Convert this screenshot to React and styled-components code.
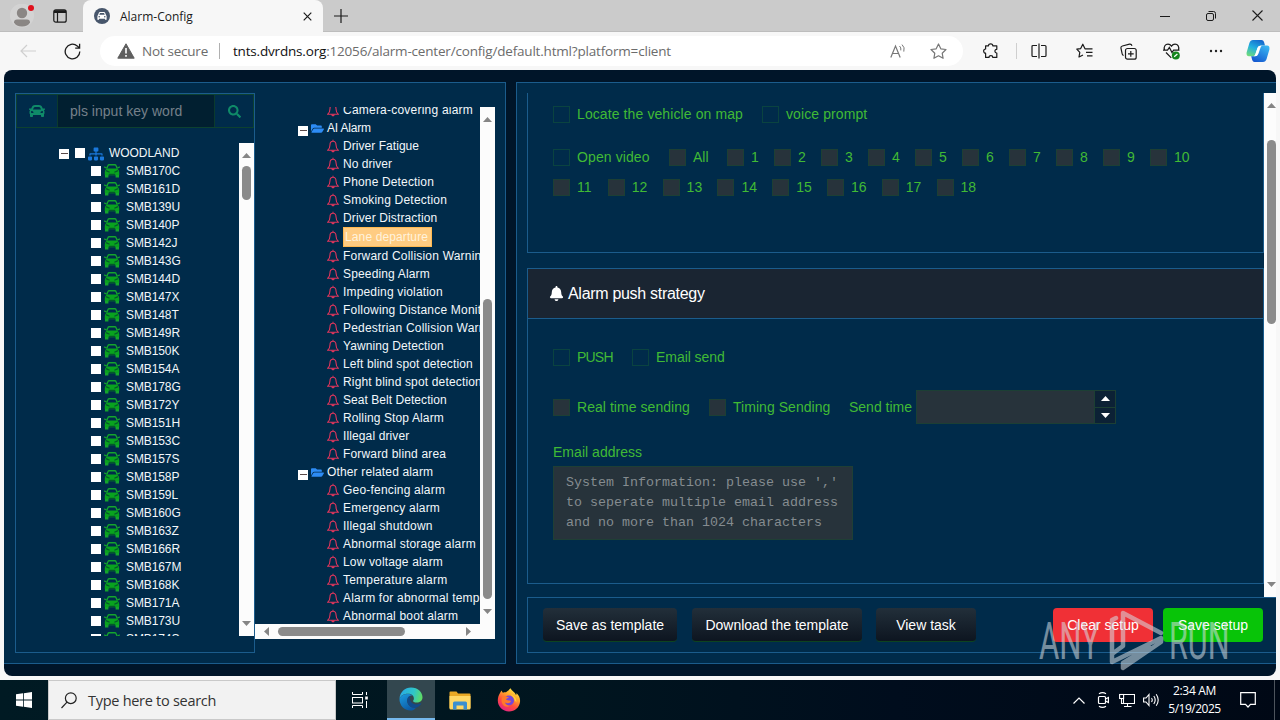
/***************************\
*                           *
*  Alarm-Config page        *
*                           *
\***************************/

import React from 'react';
import styled, { createGlobalStyle, css } from 'styled-components';
import { FaCar, FaSearch, FaSitemap, FaFolderOpen, FaBell } from 'react-icons/fa';

const GlobalStyle = createGlobalStyle`
  * { box-sizing: border-box; }
  body {
    margin: 0;
    overflow: hidden;
    font-family: 'Liberation Sans', Arial, sans-serif;
  }
  svg { display: block; flex: none; }
`;

const line = '#1b5c8c';
const green = '#40ba35';

const Desktop = styled.div`
  position: relative;
  width: 1280px;
  height: 720px;
  overflow: hidden;
  display: flex;
  flex-direction: column;
  background: #f7f7f7;
`;

//Text with adjustable spacing
const Txt = styled.span`
  white-space: pre;
  letter-spacing: ${(p) => p.$ls || 0}px;
  margin-left: ${(p) => p.$ml || 0}px;
`;

//Centred place for one icon
const Slot = styled.div`
  width: ${(p) => p.$w}px;
  height: 100%;
  flex: none;
  display: flex;
  align-items: center;
  justify-content: center;
  margin-left: ${(p) => p.$ml || 0}px;
`;

//Browser styling
const TabStrip = styled.div`
  height: 32px;
  flex: none;
  display: flex;
  background: #cbcbcb;
  border-bottom: 1px solid #bdbdbd;
  font-family: 'Open Sans', 'Noto Sans', sans-serif;
`;

const Tab = styled.div`
  width: 240px;
  height: 32px;
  margin-left: 7px;
  padding: 0 11px 0 11px;
  display: flex;
  align-items: center;
  background: #f7f7f7;
  border-radius: 8px 8px 0 0;
  font-size: 12px;
  color: #1a1a1a;
`;

const TabTitle = styled(Txt)`
  flex: 1;
`;

const Spacer = styled.div`
  flex: 1;
`;

const AddressRow = styled.div`
  height: 38px;
  flex: none;
  display: flex;
  align-items: center;
  background: #f7f7f7;
  font-family: 'Open Sans', 'Noto Sans', sans-serif;
`;

const AddressBar = styled.div`
  width: 863px;
  height: 30px;
  margin-left: 12px;
  padding-left: 17px;
  display: flex;
  align-items: center;
  background: #fff;
  border-radius: 15px;
  font-size: 13.5px;
  color: #6c6c6c;
`;

const UrlHost = styled(Txt)`
  color: #111;
`;

const Divider = styled.div`
  width: 1px;
  height: ${(p) => p.$h}px;
  margin: ${(p) => p.$m || '0'};
  background: ${(p) => p.$c || '#b0b0b0'};
`;

//The page itself
const Page = styled.div`
  width: 1272px;
  height: 606px;
  margin-left: 4px;
  flex: none;
  padding-top: 12px;
  display: flex;
  align-items: flex-start;
  gap: 10px;
  overflow: hidden;
  background: #001529;
  border-radius: 8px;
`;

const LeftPanel = styled.div`
  width: 502px;
  height: 582px;
  flex: none;
  padding: 10px 0 0 11px;
  display: flex;
  background: #002b4a;
  border: 1px solid ${line};
  border-left: none;
`;

const VehicleBox = styled.div`
  width: 240px;
  height: 560px;
  border: 1px solid ${line};
`;

const SearchBar = styled.div`
  width: 238px;
  height: 34px;
  display: flex;
  border: 1px solid #0d4130;
`;

const SearchCell = styled.div`
  width: ${(p) => p.$w}px;
  display: flex;
  align-items: center;
  justify-content: center;
  color: #0f8a68;
`;

const SearchInput = styled.div`
  flex: 1;
  padding-left: 12px;
  display: flex;
  align-items: center;
  background: #011f30;
  border: solid #0b3a2d;
  border-width: 0 1px;
  font-size: 14px;
  color: #75808a;
`;

const TreeArea = styled.div`
  width: 238px;
  height: 493px;
  margin-top: 15px;
  display: flex;
`;

const Tree = styled.div`
  flex: 1;
  height: 100%;
  padding-top: 1px;
  overflow: hidden;
`;

const VehicleRow = styled.div`
  height: 18px;
  padding-left: ${(p) => p.$pad}px;
  display: flex;
  align-items: center;
  font-size: 12px;
  color: #f2f7fa;
`;

const WhiteCheck = styled.div`
  width: 10px;
  height: 10px;
  flex: none;
  margin-left: ${(p) => p.$ml || 0}px;
  background: #fff;
`;

const MinusBox = styled.div`
  width: 10px;
  height: 10px;
  flex: none;
  display: flex;
  align-items: center;
  justify-content: center;
  margin-top: ${(p) => p.$mt}px;
  background: #fff;
  &::after {
    content: '';
    width: 7px;
    height: 1px;
    background: #5a4a4a;
  }
`;

const SiteIcon = styled(FaSitemap)`
  margin: 1px 0 0 3px;
  color: #1a78dc;
`;

const FolderIcon = styled(FaFolderOpen)`
  margin-left: 3px;
  color: #2d8cf5;
`;

//Scrollbar styling
const VBar = styled.div`
  width: ${(p) => p.$w}px;
  height: ${(p) => p.$h}px;
  flex: none;
  padding: 10px 0;
  display: flex;
  flex-direction: column;
  align-items: center;
  background: #fcfcfc;
`;

const VThumb = styled.div`
  width: 9px;
  height: ${(p) => p.$h}px;
  flex: none;
  margin-top: ${(p) => p.$mt}px;
  border-radius: 5px;
  background: #8b8b8b;
`;

const HBar = styled.div`
  width: 240px;
  height: 15px;
  padding: 0 24px 0 9px;
  display: flex;
  align-items: center;
  background: #fcfcfc;
`;

const HThumb = styled.div`
  width: 127px;
  height: 9px;
  margin-left: 9px;
  border-radius: 5px;
  background: #8b8b8b;
`;

//Alarm list styling
const AlarmColumn = styled.div`
  width: 240px;
  height: 532px;
  margin-top: 14px;
`;

const AlarmArea = styled.div`
  height: 517px;
  display: flex;
`;

const AlarmTree = styled.div`
  width: 225px;
  height: 517px;
  overflow: hidden;
`;

const AlarmRow = styled.div`
  width: 400px;
  height: ${(p) => (p.$sel ? 20 : 18)}px;
  margin-top: ${(p) => p.$mt || 0}px;
  padding-left: ${(p) => (p.$group ? 43 : 72)}px;
  display: flex;
  align-items: center;
  font-size: 12px;
  color: #f2f7fa;
`;

const AlarmLabel = styled(Txt)`
  ${(p) =>
    p.$sel &&
    css`
      width: 89px;
      height: 20px;
      padding-left: 1px;
      line-height: 18px;
      background: #ffcc82;
      border: 1px solid #ffb951;
      color: #fff3dd;
    `}
`;

//Right side styling
const RightPanel = styled.div`
  width: 790px;
  height: 582px;
  flex: none;
  padding: 10px 0 0 10px;
  background: #002b4a;
  border: 1px solid ${line};
`;

const ScrollRow = styled.div`
  height: 504px;
  display: flex;
`;

const Scrolled = styled.div`
  width: 737px;
  height: 504px;
  overflow: hidden;
`;

const ActionBox = styled.div`
  height: 160px;
  padding: 11px 0 0 25px;
  border: 1px solid ${line};
  border-top: none;
  color: ${green};
`;

const PushBox = styled.div`
  height: 316px;
  margin-top: 15px;
  border: 1px solid ${line};
  color: ${green};
`;

const PushHead = styled.div`
  height: 50px;
  padding-left: 21px;
  display: flex;
  align-items: center;
  gap: 4px;
  background: #1a2532;
  border-bottom: 1px solid ${line};
  font-size: 16px;
  color: #fff;
`;

const PushBody = styled.div`
  padding: 28px 0 0 25px;
`;

const CheckRow = styled.div`
  height: ${(p) => p.$h || 20}px;
  margin-top: ${(p) => p.$mt || 0}px;
  display: flex;
  align-items: center;
  font-size: 14px;
`;

const CheckItem = styled.div`
  width: ${(p) => p.$w}px;
  flex: none;
  display: flex;
  align-items: center;
  gap: 7px;
`;

const CheckBox = styled.div`
  width: 17px;
  height: 17px;
  flex: none;
  border: 1px solid ${(p) => (p.$off ? '#1c3f34' : '#0a4340')};
  background: ${(p) => (p.$off ? '#27333b' : 'transparent')};
`;

const TimeInput = styled.div`
  width: 200px;
  height: 34px;
  display: flex;
  background: #27333b;
  border: 1px solid #1c3f34;
`;

const Spinner = styled.div`
  width: 21px;
  margin-left: auto;
  display: flex;
  flex-direction: column;
  background: #0c2135;
  border-left: 1px solid #1c3f33;
`;

const SpinHalf = styled.div`
  flex: 1;
  display: flex;
  align-items: center;
  justify-content: center;
  & + & {
    border-top: 1px solid #1c3f33;
  }
`;

const FieldName = styled.div`
  height: 20px;
  margin-top: 18px;
  line-height: 20px;
  font-size: 14px;
`;

const EmailArea = styled.div`
  width: 300px;
  height: 74px;
  margin-top: 4px;
  padding: 6px 12px;
  background: #27333b;
  border: 1px solid #1f3f35;
  font-family: 'Liberation Mono', 'Courier New', monospace;
  font-size: 13.33px;
  line-height: 20px;
  color: #858c90;
`;

const Footer = styled.div`
  height: 56px;
  padding: 10px 0 0 15px;
  display: flex;
  border: 1px solid ${line};
`;

const Button = styled.div`
  width: ${(p) => p.$w}px;
  height: 34px;
  margin-left: ${(p) => p.$ml || 0}px;
  display: flex;
  align-items: center;
  justify-content: center;
  border-radius: 4px;
  font-size: 14px;
  color: #fff;
  background: ${(p) => p.$bg || 'linear-gradient(#222f3a, #0d1520)'};
  border-bottom: 1px solid ${(p) => p.$bg || '#0d4420'};
`;

//Taskbar styling
const Taskbar = styled.div`
  height: 40px;
  margin-top: 4px;
  flex: none;
  display: flex;
  background: linear-gradient(90deg, #001a23 0%, #00151f 45%, #000d1d 70%, #000815 100%);
  font-family: 'Open Sans', 'Noto Sans', sans-serif;
`;

const TaskSearch = styled.div`
  width: 288px;
  height: 40px;
  padding-left: 12px;
  display: flex;
  align-items: center;
  gap: 11px;
  background: #f2f2f2;
  border: 1px solid #c9c9c9;
  font-size: 14.5px;
  color: #333;
`;

const ActiveApp = styled(Slot)`
  background: #33474f;
  border-bottom: 2px solid #76b9ed;
`;

const Clock = styled.div`
  width: 63px;
  padding-top: 2px;
  font-size: 12px;
  line-height: 18px;
  text-align: center;
  color: #fff;
`;

const ShowDesktop = styled.div`
  width: 6px;
  margin-left: 5px;
  border-left: 1px solid #4d545c;
`;

//Sits over the page
const Watermark = styled.svg`
  position: absolute;
  left: 1030px;
  top: 600px;
`;

const vehicles = [
  'SMB170C', 'SMB161D', 'SMB139U', 'SMB140P', 'SMB142J', 'SMB143G', 'SMB144D',
  'SMB147X', 'SMB148T', 'SMB149R', 'SMB150K', 'SMB154A', 'SMB178G', 'SMB172Y',
  'SMB151H', 'SMB153C', 'SMB157S', 'SMB158P', 'SMB159L', 'SMB160G', 'SMB163Z',
  'SMB166R', 'SMB167M', 'SMB168K', 'SMB171A', 'SMB173U', 'SMB174S',
];

const alarms = [
  { t: 'Camera-covering alarm', ls: 0.22 },
  { t: 'AI Alarm', group: true, ls: -0.2 },
  { t: 'Driver Fatigue', ls: 0.05 },
  { t: 'No driver', ls: 0.05 },
  { t: 'Phone Detection', ls: 0.15 },
  { t: 'Smoking Detection', ls: 0.2 },
  { t: 'Driver Distraction', ls: 0.13 },
  { t: 'Lane departure', sel: true, ls: 0.12 },
  { t: 'Forward Collision Warning', ls: 0.2 },
  { t: 'Speeding Alarm', ls: 0.15 },
  { t: 'Impeding violation', ls: 0.17 },
  { t: 'Following Distance Monitoring', ls: 0.2 },
  { t: 'Pedestrian Collision Warning', ls: 0.2 },
  { t: 'Yawning Detection', ls: 0.1 },
  { t: 'Left blind spot detection', ls: 0.12 },
  { t: 'Right blind spot detection', ls: 0.16 },
  { t: 'Seat Belt Detection', ls: 0.05 },
  { t: 'Rolling Stop Alarm', ls: 0.12 },
  { t: 'Illegal driver', ls: 0.12 },
  { t: 'Forward blind area', ls: 0.17 },
  { t: 'Other related alarm', group: true, ls: 0.15 },
  { t: 'Geo-fencing alarm', ls: 0.2 },
  { t: 'Emergency alarm', ls: 0.2 },
  { t: 'Illegal shutdown', ls: 0.23 },
  { t: 'Abnormal storage alarm', ls: 0.22 },
  { t: 'Low voltage alarm', ls: 0.15 },
  { t: 'Temperature alarm', ls: 0.22 },
  { t: 'Alarm for abnormal temperature', ls: 0.2 },
  { t: 'Abnormal boot alarm', ls: 0.2 },
];

const Icon = ({ w = 18, h = w, vb, children, ...rest }) => (
  <svg width={w} height={h} viewBox={vb || `0 0 ${w} ${h}`} fill="none" stroke="#1b1b1b" strokeWidth="1.2" {...rest}>
    {children}
  </svg>
);

const Arrow = ({ dir, c = '#858585' }) => {
  const d = {
    up: 'M0 5L4.5 0L9 5Z',
    down: 'M0 0L4.5 5L9 0Z',
    left: 'M5 0L0 4.5L5 9Z',
    right: 'M0 0L5 4.5L0 9Z',
  }[dir];
  const flat = dir === 'up' || dir === 'down';
  return (
    <svg width={flat ? 9 : 5} height={flat ? 5 : 9}>
      <path d={d} fill={c} />
    </svg>
  );
};

const CarIcon = styled(Icon)`
  margin-left: 3px;
`;

const TreeCar = () => (
  <CarIcon w={16} h={14} stroke="#14a52d">
    <path d="M2.6 4.6L4 1.6Q4.3 0.8 5.2 0.8H10.8Q11.7 0.8 12 1.6L13.4 4.6" strokeWidth="1.4" />
    <path d="M0.2 2.8L2.4 4M15.8 2.8L13.6 4" strokeWidth="1.3" />
    <path d="M3 4.4H13Q15.2 5.4 15.2 8V11.2H0.8V8Q0.8 5.4 3 4.4Z" fill="#09a31f" stroke="none" />
    <path d="M1 11H4.4V13.6H1ZM11.6 11H15V13.6H11.6Z" fill="#14a52d" stroke="none" />
    <path d="M2 6.6L5.6 8.2M14 6.6L10.4 8.2M4.8 10.4H11.2" stroke="#04572b" strokeWidth="1.2" />
  </CarIcon>
);

const Bell = () => (
  <Icon w={12} h={14} stroke="#e0365c" strokeWidth="1.1">
    <path d="M6 0.8V2.2M6 2.2C3.9 2.2 3 3.8 3 5.8C3 8.6 2.4 9.8 0.8 11.2H11.2C9.6 9.8 9 8.6 9 5.8C9 3.8 8.1 2.2 6 2.2Z" />
    <path d="M4.8 12Q6 13.8 7.2 12Z" fill="#e0365c" />
  </Icon>
);

const Check = ({ w, off, ls, children }) => (
  <CheckItem $w={w}>
    <CheckBox $off={off} />
    <Txt $ls={ls}>{children}</Txt>
  </CheckItem>
);

const EdgeLogo = () => (
  <svg width="24" height="24" viewBox="0 0 24 24">
    <defs>
      <linearGradient id="edgeTop" x1="0" y1="0.3" x2="1" y2="0.5">
        <stop offset="0" stopColor="#28a9e8" />
        <stop offset="0.6" stopColor="#2fc6c8" />
        <stop offset="1" stopColor="#5fdc64" />
      </linearGradient>
      <linearGradient id="edgeLow" x1="0" y1="0" x2="0.6" y2="1">
        <stop offset="0" stopColor="#1b9de2" />
        <stop offset="1" stopColor="#0c59a4" />
      </linearGradient>
    </defs>
    <path d="M0.5 11.5C1 5 6 0.5 12 0.5C19 0.5 23.5 5.5 23.5 10.2C23.5 13.7 20.8 15.6 17.8 15.6C15.4 15.6 14 14.8 14 14C14 13.4 14.9 13 14.9 11.4C14.9 8.7 12.5 6.8 9 6.8C4.6 6.8 1.7 9 0.5 11.5Z" fill="url(#edgeTop)" />
    <path d="M0.5 11.5C1.7 8.6 4.9 6.9 8.6 6.9C11 6.9 12.6 7.6 13.6 8.5C10.6 8 8.2 10.6 8.2 13.6C8.2 18 12 21.6 17 20.7C15.5 22.8 13.4 23.5 11.6 23.5C5 23.5 0.2 18 0.5 11.5Z" fill="url(#edgeLow)" />
    <path d="M8.2 13.6C8.2 11.4 9.5 9.5 11 9.1C10 14 13 17.4 17.4 17.4C19.4 17.4 20.9 16.7 21.8 16.2C22.3 16 22.5 16.3 22.2 16.8C21 19 18.6 20.8 16 20.9C12 21.2 8.2 18 8.2 13.6Z" fill="#114a8b" />
  </svg>
);

const FirefoxLogo = () => (
  <svg width="24" height="24" viewBox="0 0 24 24">
    <defs>
      <linearGradient id="fox" x1="0.8" y1="0" x2="0.25" y2="1">
        <stop offset="0" stopColor="#fff14a" />
        <stop offset="0.35" stopColor="#ffa32a" />
        <stop offset="0.65" stopColor="#ff4b3e" />
        <stop offset="1" stopColor="#e3208a" />
      </linearGradient>
    </defs>
    <path d="M3 5C3.3 4 4 3 4.8 2.4C5 3.5 5.4 4.2 6 4.8C7.5 4 8.6 4.2 9 4.3C10.5 2.8 12 2.2 13.5 0.3C14.5 2.8 18 4.2 19 7C19.6 6.6 19.6 5.6 19.4 5C22.2 7.6 23.4 10.5 23 14C22.3 19.6 17.8 23.5 12 23.5C5.6 23.5 0.8 18.6 0.8 12.6C0.8 9.8 1.6 7.2 3 5Z" fill="url(#fox)" />
    <circle cx="12" cy="12.5" r="5" fill="#7546d9" />
    <path d="M5 9.5C7 8 10.5 8.2 12 10C10.4 10 9.3 10.6 9.1 11.4C10.1 12.6 13.3 12 14 13.2C13 15.4 10.3 15.8 8 14.6C8.6 17 11 18 13.5 17.6C11 19.5 7.5 19 5.8 16.5C4.4 14.4 4.2 11.6 5 9.5Z" fill="#ff7a2a" />
    <path d="M13 6.5C17 7 19.8 10.4 19.4 14.4C18.8 13.4 18.4 13 17.8 12.6C17.4 9.8 15.6 7.8 13 6.5Z" fill="#ffd23a" />
  </svg>
);

const BrowserTop = () => (
  <>
    <TabStrip>
      <Slot $w={44}>
        <svg width="24" height="24" viewBox="0 0 24 24">
          <circle cx="12" cy="11.5" r="12" fill="#d3d3d3" />
          <circle cx="12" cy="9" r="5.2" fill="#8a8684" />
          <path d="M4 18.5Q4 15.5 7 15.5H17Q20 15.5 20 18.5Q18 22.5 12 22.5Q6 22.5 4 18.5Z" fill="#8a8684" />
          <circle cx="21" cy="4" r="3" fill="#e0101c" />
        </svg>
      </Slot>
      <Slot $w={32}>
        <Icon w={14}>
          <rect x="0.8" y="0.8" width="12.4" height="12.4" rx="2" />
          <path d="M1 2.6H13" strokeWidth="2.8" />
          <path d="M4.5 3V13" />
        </Icon>
      </Slot>
      <Tab>
        <svg width="16" height="16" viewBox="0 0 16 16">
          <circle cx="8" cy="8" r="8" fill="#47566b" />
          <path d="M4 7L5 4.6Q5.2 4 6 4H10Q10.8 4 11 4.6L12 7L12.6 8V11.8H11V10.8H5V11.8H3.4V8Z" fill="#fff" />
          <path d="M5.2 6.8L6 5H10L10.8 6.8Z" fill="#47566b" />
          <circle cx="5.2" cy="8.8" r="0.8" fill="#47566b" />
          <circle cx="10.8" cy="8.8" r="0.8" fill="#47566b" />
        </svg>
        <TabTitle $ls={0} $ml={10}>Alarm-Config</TabTitle>
        <Icon w={9}>
          <path d="M0.7 0.7L8.3 8.3M8.3 0.7L0.7 8.3" />
        </Icon>
      </Tab>
      <Slot $w={35}>
        <Icon w={14}>
          <path d="M7 0V14M0 7H14" />
        </Icon>
      </Slot>
      <Spacer />
      <Slot $w={46}>
        <Icon w={10}>
          <path d="M0 5.5H10" strokeWidth="1" />
        </Icon>
      </Slot>
      <Slot $w={46}>
        <Icon w={10} strokeWidth="1">
          <rect x="0.5" y="2.5" width="7" height="7" rx="1.5" />
          <path d="M2.5 0.5H7.5Q9.5 0.5 9.5 2.5V7.5" />
        </Icon>
      </Slot>
      <Slot $w={46}>
        <Icon w={11}>
          <path d="M0.5 0.5L10.5 10.5M10.5 0.5L0.5 10.5" strokeWidth="1.1" />
        </Icon>
      </Slot>
    </TabStrip>
    <AddressRow>
      <Slot $w={56}>
        <Icon w={16} h={14} stroke="#cfcfcf">
          <path d="M16 7H1M7 1L1 7L7 13" />
        </Icon>
      </Slot>
      <Slot $w={32}>
        <Icon w={17} strokeWidth="1.3">
          <path d="M15.8 8.5A7.3 7.3 0 1 1 13.2 2.9L15.4 5M15.6 0.8V5.2H11.2" />
        </Icon>
      </Slot>
      <AddressBar>
        <svg width="18" height="16" viewBox="0 0 18 16">
          <path d="M9 0.8L17.2 15.2H0.8Z" fill="#5f5f5f" stroke="#5f5f5f" strokeLinejoin="round" />
          <path d="M9 5V10.5M9 12V13.8" stroke="#fff" strokeWidth="1.6" />
        </svg>
        <Txt $ls={-0.25} $ml={7}>Not secure</Txt>
        <Divider $h={16} $m="0 13px 0 11px" />
        <UrlHost $ls={-0.18}>tnts.dvrdns.org</UrlHost>
        <Txt $ls={-0.19}>:12056/alarm-center/config/default.html?platform=client</Txt>
        <Spacer />
        <Slot $w={40}>
          <Icon w={16} h={14} stroke="#777">
            <path d="M0.8 13.5L5.5 2L10.2 13.5M2.5 9.5H8.5" />
            <path d="M9.5 2Q11.4 3.6 10.8 6.4M12 0.6Q15.2 3.4 13.8 7.6" strokeWidth="1" />
          </Icon>
        </Slot>
        <Slot $w={40}>
          <Icon w={17} h={16} stroke="#777" strokeLinejoin="round">
            <path d="M8.5 1L10.8 5.8L16 6.5L12.2 10.2L13.1 15.3L8.5 12.8L3.9 15.3L4.8 10.2L1 6.5L6.2 5.8Z" />
          </Icon>
        </Slot>
        <Slot $w={5} />
      </AddressBar>
      <Slot $w={50} $ml={3}>
        <Icon w={16} strokeWidth="1.2" strokeLinejoin="round">
          <path d="M5.5 2.8C5.5 0.2 9.8 0.2 9.8 2.8H13.8V6.3C11.3 6 11.3 10.2 13.8 10V14.4H9.8C9.8 12 6 12 6 14.4H2.6V10.2C0 10.2 0 6 2.6 6V2.8Z" />
        </Icon>
      </Slot>
      <Divider $h={16} $c="#cfcfcf" />
      <Slot $w={44}>
        <Icon w={16}>
          <path d="M6 2.5H2Q1 2.5 1 3.5V12.5Q1 13.5 2 13.5H6M10 2.5H14Q15 2.5 15 3.5V12.5Q15 13.5 14 13.5H10M8 0.5V15.5" />
        </Icon>
      </Slot>
      <Slot $w={46}>
        <Icon w={17} h={16} strokeLinejoin="round">
          <path d="M10 5.8H9L6.8 1.2L4.7 5.6L0.8 6.2L3.8 9.4L3 14L7 12M10 5.8H16.5M10 9.3H16.5M11 12.8H16.5" />
        </Icon>
      </Slot>
      <Slot $w={42}>
        <Icon w={17}>
          <rect x="5.5" y="5.5" width="10.7" height="10.7" rx="2" />
          <path d="M10.8 8V13.8M8 10.9H13.7M3.6 12.5Q2.4 12 2.2 11L0.9 5Q0.7 3.4 2.4 3L9.5 1.2Q11.4 0.9 12 2.8" />
        </Icon>
      </Slot>
      <Slot $w={46}>
        <Icon w={18} h={17}>
          <path d="M1.5 7C0.4 3.5 2.4 1.2 5 1.2Q7.2 1.2 8.5 3.2Q9.8 1.2 12 1.2C14.8 1.2 16.6 3.6 15.4 7M0 7.2H4.5L6.4 4.5L9 9.5L10.6 7.2H16.5M3 9.5L8.3 14.8" />
          <circle cx="12.8" cy="12.4" r="4" fill="#14851c" stroke="none" />
          <path d="M11.2 13.8L14.4 11" stroke="#fff" />
        </Icon>
      </Slot>
      <Slot $w={42}>
        <Icon w={14} h={4} stroke="none">
          <circle cx="2" cy="2" r="1.2" fill="#222" />
          <circle cx="7" cy="2" r="1.2" fill="#222" />
          <circle cx="12" cy="2" r="1.2" fill="#222" />
        </Icon>
      </Slot>
      <Slot $w={42}>
        <svg width="24" height="24" viewBox="0 0 24 24">
          <defs>
            <linearGradient id="copA" x1="0.7" y1="0" x2="0.2" y2="1">
              <stop offset="0" stopColor="#1568cd" />
              <stop offset="0.5" stopColor="#22aee0" />
              <stop offset="1" stopColor="#6edb7c" />
            </linearGradient>
            <linearGradient id="copB" x1="0.8" y1="0" x2="0.2" y2="1">
              <stop offset="0" stopColor="#39b6f2" />
              <stop offset="1" stopColor="#1456cf" />
            </linearGradient>
          </defs>
          <path d="M7 1H15.5Q17.5 1 18 3L19 6.5H15Q12.5 6.5 11.6 9L9.4 15.5Q8.8 17.2 7 17.2H3Q0 17.2 0.6 13.5L3.4 4Q4.4 1 7 1Z" fill="url(#copA)" />
          <path d="M17 23H8.5Q6.8 23 6.2 21L5.2 17.3H9Q11.5 17.3 12.4 14.8L14.6 8.4Q15.2 6.6 17 6.6H21Q24 6.6 23.4 10.4L20.6 20Q19.6 23 17 23Z" fill="url(#copB)" />
          <path d="M10.2 17Q11 16.6 11.5 15.5L13.8 8.5Q14.2 7.2 15 6.7L13 7Q12 7.5 11.4 9L9.2 15.6Q9 16.5 8.2 17.2Z" fill="#fff" />
        </svg>
      </Slot>
    </AddressRow>
  </>
);

const VehicleList = () => (
  <VehicleBox>
    <SearchBar>
      <SearchCell $w={40}>
        <FaCar size={16} />
      </SearchCell>
      <SearchInput>
        <Txt $ls={0.02}>pls input key word</Txt>
      </SearchInput>
      <SearchCell $w={38}>
        <FaSearch size={13} />
      </SearchCell>
    </SearchBar>
    <TreeArea>
      <Tree>
        <VehicleRow $pad={43}>
          <MinusBox $mt={1} />
          <WhiteCheck $ml={6} />
          <SiteIcon size={16} />
          <Txt $ls={-0.05} $ml={5}>WOODLAND</Txt>
        </VehicleRow>
        {vehicles.map((v) => (
          <VehicleRow key={v} $pad={75}>
            <WhiteCheck />
            <TreeCar />
            <Txt $ml={6} $ls={-0.1}>{v}</Txt>
          </VehicleRow>
        ))}
      </Tree>
      <VBar $w={15} $h={493}>
        <Arrow dir="up" />
        <VThumb $h={34} $mt={8} />
        <Spacer />
        <Arrow dir="down" />
      </VBar>
    </TreeArea>
  </VehicleBox>
);

const AlarmList = () => (
  <AlarmColumn>
    <AlarmArea>
      <AlarmTree>
        {alarms.map((a, i) => (
          <AlarmRow key={a.t} $group={a.group} $sel={a.sel} $mt={i === 0 ? -6 : 0}>
            {a.group ? (
              <>
                <MinusBox $mt={5} />
                <FolderIcon size={13} />
              </>
            ) : (
              <Bell />
            )}
            <AlarmLabel $ml={a.group ? 3 : 4} $ls={a.ls} $sel={a.sel}>
              {a.t}
            </AlarmLabel>
          </AlarmRow>
        ))}
      </AlarmTree>
      <VBar $w={15} $h={517}>
        <Arrow dir="up" />
        <VThumb $h={300} $mt={177} />
        <Spacer />
        <Arrow dir="down" />
      </VBar>
    </AlarmArea>
    <HBar>
      <Arrow dir="left" />
      <HThumb />
      <Spacer />
      <Arrow dir="right" />
    </HBar>
  </AlarmColumn>
);

const Settings = () => (
  <Scrolled>
    <ActionBox>
      <CheckRow>
        <Check w={209} ls={0.1}>Locate the vehicle on map</Check>
        <Check w={150} ls={0.1}>voice prompt</Check>
      </CheckRow>
      <CheckRow $mt={23}>
        <Check w={116} ls={0.1}>Open video</Check>
        <Check w={58} off>All</Check>
        {[1, 2, 3, 4, 5, 6, 7, 8, 9, 10].map((n) => (
          <Check key={n} w={47} off>{n}</Check>
        ))}
      </CheckRow>
      <CheckRow $mt={10}>
        {[11, 12, 13, 14, 15, 16, 17, 18].map((n) => (
          <Check key={n} w={54.8} off>{n}</Check>
        ))}
      </CheckRow>
    </ActionBox>
    <PushBox>
      <PushHead>
        <FaBell size={15} />
        <Txt $ls={-0.3}>Alarm push strategy</Txt>
      </PushHead>
      <PushBody>
        <CheckRow>
          <Check w={79} ls={-0.8}>PUSH</Check>
          <Check w={120} ls={-0.05}>Email send</Check>
        </CheckRow>
        <CheckRow $h={34} $mt={23}>
          <Check w={156} off ls={0.05}>Real time sending</Check>
          <Check w={140} off ls={0.05}>Timing Sending</Check>
          <CheckItem $w={67}>
            <Txt>Send time</Txt>
          </CheckItem>
          <TimeInput>
            <Spinner>
              <SpinHalf><Arrow dir="up" c="#fff" /></SpinHalf>
              <SpinHalf><Arrow dir="down" c="#fff" /></SpinHalf>
            </Spinner>
          </TimeInput>
        </CheckRow>
        <FieldName>
          <Txt $ls={0.03}>Email address</Txt>
        </FieldName>
        <EmailArea>
          System Information: please use ',' to seperate multiple email address and no more than 1024 characters
        </EmailArea>
      </PushBody>
    </PushBox>
  </Scrolled>
);

const TaskbarView = () => (
  <Taskbar>
    <Slot $w={48}>
      <svg width="16" height="16" viewBox="0 0 16 16" fill="#fff">
        <path d="M0 2.3L7 1.3V7.6H0ZM7.8 1.2L16 0V7.6H7.8ZM0 8.4H7V14.7L0 13.7ZM7.8 8.4H16V16L7.8 14.8Z" />
      </svg>
    </Slot>
    <TaskSearch>
      <Icon w={16} h={17} stroke="#222">
        <circle cx="9.8" cy="6.2" r="5.4" />
        <path d="M6 10.2L0.5 16" />
      </Icon>
      <Txt $ls={-0.28}>Type here to search</Txt>
    </TaskSearch>
    <Slot $w={48}>
      <Icon w={16} h={16} stroke="#fff" strokeWidth="1">
        <path d="M0.5 0V2.5H10.5V0M0.5 16V13.5H10.5V16M14.5 0V3M14.5 9V16" />
        <rect x="0.5" y="5.5" width="10" height="5.5" />
        <rect x="13.2" y="4.5" width="2.6" height="3" fill="#fff" stroke="none" />
      </Icon>
    </Slot>
    <ActiveApp $w={48} $ml={3}>
      <EdgeLogo />
    </ActiveApp>
    <Slot $w={48} $ml={1}>
      <svg width="22" height="19" viewBox="0 0 22 19">
        <path d="M0.5 1.5Q0.5 0.5 1.5 0.5H7.5L9 2.5H20.5Q21.5 2.5 21.5 3.5V17H0.5Z" fill="#e9a825" />
        <path d="M0.5 5H21.5V17.5Q21.5 18.5 20.5 18.5H1.5Q0.5 18.5 0.5 17.5Z" fill="#ffd766" />
        <path d="M4 18.5V12Q4 10.5 5.5 10.5H16.5Q18 10.5 18 12V18.5H14.5V14.5H7.5V18.5Z" fill="#3c8fd0" />
      </svg>
    </Slot>
    <Slot $w={48} $ml={1}>
      <FirefoxLogo />
    </Slot>
    <Spacer />
    <Slot $w={24}>
      <Icon w={12} h={7} stroke="#fff">
        <path d="M0.5 6.5L6 1L11.5 6.5" />
      </Icon>
    </Slot>
    <Slot $w={24}>
      <Icon w={12} h={16} stroke="#fff">
        <rect x="1.5" y="4.5" width="7" height="7" rx="1" />
        <path d="M8.5 7L11.4 5.5V10.5L8.5 9M2 1.8Q5.5 -0.4 9 1.8M2 14.2Q5.5 16.4 9 14.2" />
      </Icon>
    </Slot>
    <Slot $w={24}>
      <Icon w={16} h={15} stroke="#fff" strokeWidth="1.1">
        <path d="M5 1.5H15.5V10.5H4.5V6M8.5 10.5V13.5M5 13.5H12.5M2.5 5.5V10.5H4.5" />
        <rect x="0.6" y="1.5" width="4" height="4" />
      </Icon>
    </Slot>
    <Slot $w={24}>
      <Icon w={17} h={14} stroke="#fff" strokeWidth="1.1">
        <path d="M0.6 5H3L6 1.5V12.5L3 9H0.6ZM8.5 5Q10 7 8.5 9M10.8 3Q13.6 7 10.8 11M13.2 1.2Q17.2 7 13.2 12.8" />
      </Icon>
    </Slot>
    <Clock>
      <Txt $ls={-0.3}>2:34 AM</Txt>
      <br />
      <Txt $ls={-0.5}>5/19/2025</Txt>
    </Clock>
    <Slot $w={43}>
      <Icon w={16} h={16} stroke="#fff">
        <path d="M0.7 0.7H15.3V12.3H10.5L8 15L5.5 12.3H0.7Z" />
      </Icon>
    </Slot>
    <ShowDesktop />
  </Taskbar>
);

export default function App() {
  return (
    <Desktop>
      <GlobalStyle />
      <BrowserTop />
      <Page>
        <LeftPanel>
          <VehicleList />
          <AlarmList />
        </LeftPanel>
        <RightPanel>
          <ScrollRow>
            <Settings />
            <VBar $w={15} $h={504}>
              <Arrow dir="up" />
              <VThumb $h={184} $mt={32} />
              <Spacer />
              <Arrow dir="down" />
            </VBar>
          </ScrollRow>
          <Footer>
            <Button $w={134}><Txt>Save as template</Txt></Button>
            <Button $w={170} $ml={15}><Txt>Download the template</Txt></Button>
            <Button $w={100} $ml={14}><Txt>View task</Txt></Button>
            <Button $w={100} $ml={77} $bg="#f03036"><Txt>Clear setup</Txt></Button>
            <Button $w={100} $ml={10} $bg="#08c408"><Txt>Save setup</Txt></Button>
          </Footer>
        </RightPanel>
      </Page>
      <TaskbarView />
      <Watermark width="210" height="80" opacity="0.55">
        <g fill="#d5dde3" fontFamily="Roboto, sans-serif" fontSize="51">
          <text transform="translate(9 59) scale(0.61 1)">ANY</text>
          <text transform="translate(139 59) scale(0.6 1)">RUN</text>
        </g>
        <g fill="none" stroke="#d5dde3" strokeWidth="4.5" strokeLinejoin="round" strokeLinecap="round">
          <path d="M131 33L93 13V46L82 54V20L86 18M82 54V62L131 38V42L93 68V63L119 47" />
        </g>
      </Watermark>
    </Desktop>
  );
}
